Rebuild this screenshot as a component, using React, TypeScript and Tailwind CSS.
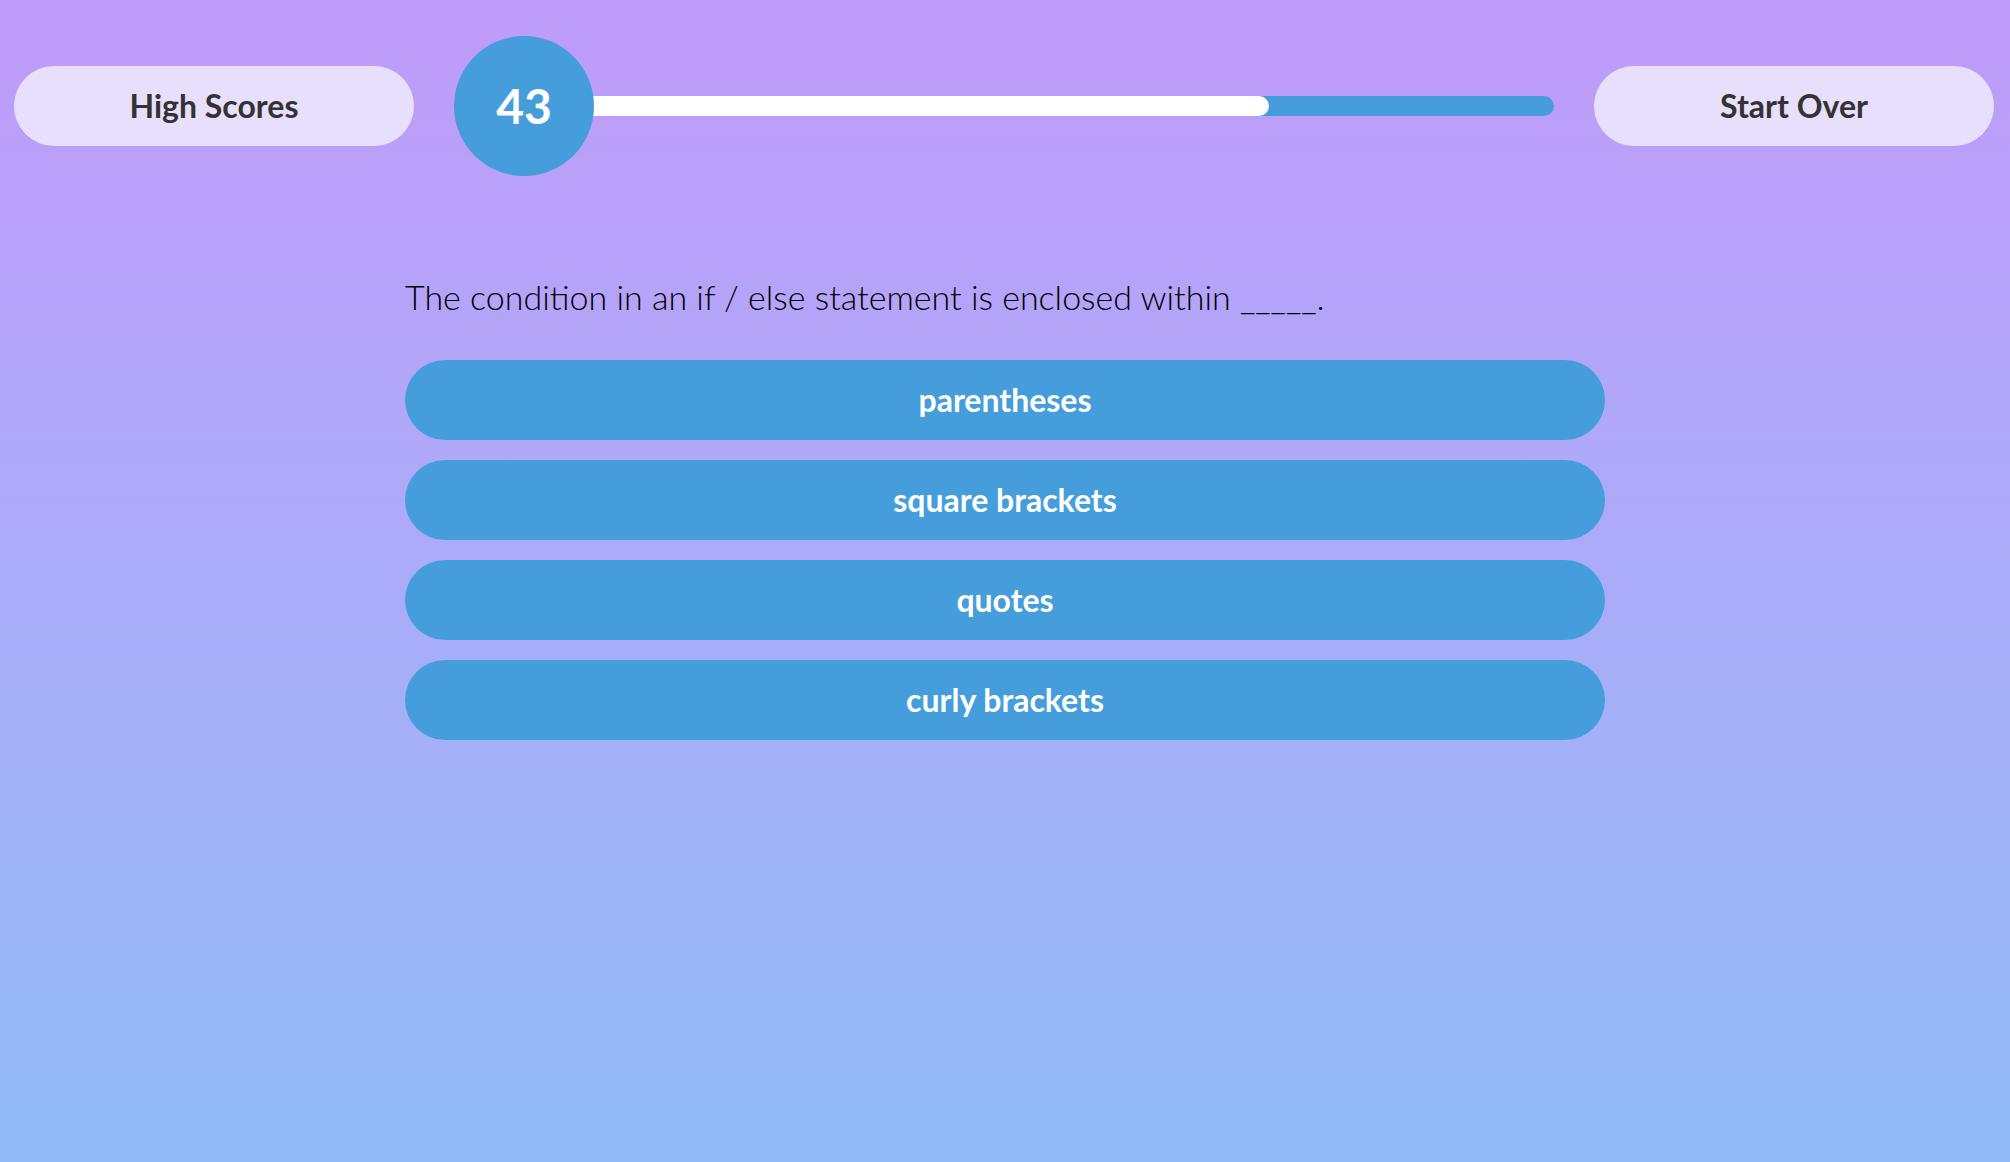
import React from "react";

const answers = ["parentheses", "square brackets", "quotes", "curly brackets"];

export default function App() {
  const fill = 745;
  return (
    <div className="min-h-[1162px] w-full bg-gradient-to-b from-[#bf9bf9] to-[#90bbf8] font-['Lato',sans-serif]">
      <header className="flex items-center gap-[40px] pl-[14px] pr-[16px] pt-[36px]">
        <button className="h-[80px] w-[400px] shrink-0 rounded-full bg-[#e8dffd] text-[32px] font-bold text-[#333]">
          High Scores
        </button>
        <div className="flex flex-1 items-center">
          <div className="relative z-10 flex h-[140px] w-[140px] shrink-0 items-center justify-center rounded-full bg-[#459edb] text-[48px] font-bold text-white">
            43
          </div>
          <div className="-ml-[70px] h-[20px] flex-1 overflow-hidden rounded-full bg-[#459edb]">
            <div className="h-full rounded-full bg-white" style={{ width: fill }} />
          </div>
        </div>
        <button className="h-[80px] w-[400px] shrink-0 rounded-full bg-[#e8dffd] text-[32px] font-bold text-[#333]">
          Start Over
        </button>
      </header>
      <main className="mx-auto mt-[97px] w-[1200px]">
        <p className="text-[34px] font-light leading-[48px] text-black">
          The condition in an if / else statement is enclosed within _____.
        </p>
        <div className="mt-[39px] flex flex-col gap-[20px]">
          {answers.map((a) => (
            <button
              key={a}
              className="h-[80px] w-full rounded-full bg-[#459edb] text-[32px] font-bold text-white"
            >
              {a}
            </button>
          ))}
        </div>
      </main>
    </div>
  );
}
